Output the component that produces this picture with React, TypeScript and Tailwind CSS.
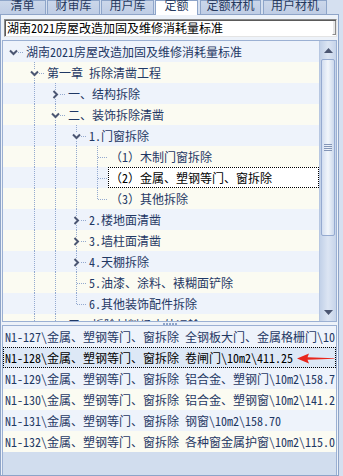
import React from "react";

type TreeRow = {
  label: string;
  guides: boolean[];
  top: boolean;
  bottom: boolean;
  arrow?: "down" | "right";
  selected?: boolean;
};

const treeRows: TreeRow[] = [
  { label: "湖南2021房屋改造加固及维修消耗量标准", guides: [], top: false, bottom: false, arrow: "down" },
  { label: "第一章 拆除清凿工程", guides: [false], top: true, bottom: true, arrow: "down" },
  { label: "一、结构拆除", guides: [false, true], top: true, bottom: true, arrow: "right" },
  { label: "二、装饰拆除清凿", guides: [false, true], top: true, bottom: true, arrow: "down" },
  { label: "1.门窗拆除", guides: [false, true, true], top: true, bottom: true, arrow: "down" },
  { label: "（1）木制门窗拆除", guides: [false, true, true, true], top: true, bottom: true },
  { label: "（2）金属、塑钢等门、窗拆除", guides: [false, true, true, true], top: true, bottom: true, selected: true },
  { label: "（3）其他拆除", guides: [false, true, true, true], top: true, bottom: false },
  { label: "2.楼地面清凿", guides: [false, true, true], top: true, bottom: true, arrow: "right" },
  { label: "3.墙柱面清凿", guides: [false, true, true], top: true, bottom: true, arrow: "right" },
  { label: "4.天棚拆除", guides: [false, true, true], top: true, bottom: true, arrow: "right" },
  { label: "5.油漆、涂料、裱糊面铲除", guides: [false, true, true], top: true, bottom: true },
  { label: "6.其他装饰配件拆除", guides: [false, true, true], top: true, bottom: false },
  { label: "三、拆除材料场内外运输", guides: [false, true], top: true, bottom: true, arrow: "right" },
];

const listRows = [
  "N1-127\\金属、塑钢等门、窗拆除 全钢板大门、金属格栅门\\10m2\\290.14",
  "N1-128\\金属、塑钢等门、窗拆除 卷闸门\\10m2\\411.25",
  "N1-129\\金属、塑钢等门、窗拆除 铝合金、塑钢门\\10m2\\158.70",
  "N1-130\\金属、塑钢等门、窗拆除 铝合金、塑钢窗\\10m2\\141.20",
  "N1-131\\金属、塑钢等门、窗拆除 钢窗\\10m2\\158.70",
  "N1-132\\金属、塑钢等门、窗拆除 各种窗金属护窗\\10m2\\115.00",
];

const LINE = "#93a9cf";
const ARROW = "#4b5672";

function GuideCell({ on }: { on: boolean }) {
  return (
    <svg width="21" height="21" className="block shrink-0" shapeRendering="crispEdges">
      {on && <line x1="10.5" y1="0" x2="10.5" y2="21" stroke={LINE} strokeWidth="1" strokeDasharray="1 1" />}
    </svg>
  );
}

function ConnectorCell({ row }: { row: TreeRow }) {
  const a = row.arrow;
  return (
    <svg width="21" height="21" className="block shrink-0">
      <g shapeRendering="crispEdges">
        {row.top && <line x1="10.5" y1="0" x2="10.5" y2={a ? 7 : 11.5} stroke={LINE} strokeDasharray="1 1" />}
        {row.bottom && <line x1="10.5" y1={a ? 16 : 11.5} x2="10.5" y2="21" stroke={LINE} strokeDasharray="1 1" />}
        <line x1={a ? 15 : 11} y1="11.5" x2="21" y2="11.5" stroke={LINE} strokeDasharray="1 1" />
      </g>
      {a === "down" && (
        <path d="M7 9.5 L10.5 13 L14 9.5" fill="none" stroke={ARROW} strokeWidth="2" />
      )}
      {a === "right" && (
        <path d="M8.5 8 L12 11.5 L8.5 15" fill="none" stroke={ARROW} strokeWidth="2" />
      )}
    </svg>
  );
}

function Tabs() {
  const tabs = [
    { t: "清单", w: "w-[46px]", ml: "ml-0", edge: "border-l-0" },
    { t: "财审库", w: "w-[53px]", ml: "ml-[1px]", edge: "" },
    { t: "用户库", w: "w-[53px]", ml: "ml-[1px]", edge: "" },
    { t: "定额", w: "w-[43px]", ml: "ml-[1px]", edge: "", active: true },
    { t: "定额材机", w: "w-[61px]", ml: "ml-[2px]", edge: "" },
    { t: "用户材机", w: "w-[64px]", ml: "ml-[2px]", edge: "" },
  ];
  return (
    <div className="flex h-[14px] items-start">
      {tabs.map((tab) => (
        <div
          key={tab.t}
          className={`${tab.w} ${tab.ml} ${tab.edge} flex justify-center items-start border border-b-0 border-[#8ea5c9] text-[#26395e] ${
            tab.active ? "relative z-10 h-[15px] bg-white" : "h-[14px] bg-gradient-to-b from-[#cbd7ea] to-[#bfcde5]"
          }`}
        >
          <span className="-mt-[3px] leading-[14px] text-[12px] whitespace-nowrap">{tab.t}</span>
        </div>
      ))}
    </div>
  );
}

function Input() {
  return (
    <div className="ml-[2px] h-[18px] flex border border-[#8a8a8a] border-r-[#e4e4e4] border-b-[#e4e4e4] bg-white shadow-[inset_1px_1px_0_#5a5a5a]">
      <div className="flex-1 pl-[2px] leading-[16px] text-black whitespace-nowrap overflow-hidden">
        湖南2021房屋改造加固及维修消耗量标准
      </div>
      <div className="w-[4px] h-[14px] mt-[1px] bg-[#e8e8e8] border-l border-white border-r border-b border-r-[#8a8a8a] border-b-[#8a8a8a]" />
    </div>
  );
}

function Scrollbar() {
  return (
    <div className="w-[17px] shrink-0 flex flex-col bg-gradient-to-r from-[#c2d1e8] via-[#dce5f3] to-[#c6d4ea] border-l border-[#b7c7e1]">
      <div className="h-[18px] flex items-center justify-center">
        <svg width="9" height="5" className="block">
          <path d="M0 5 L4.5 0 L9 5 Z" fill={ARROW} />
        </svg>
      </div>
      <div className="h-[177px] mx-[1px] rounded-[2px] border border-[#95aad0] bg-gradient-to-r from-[#d3def0] via-[#f2f6fb] to-[#ccd9ed] flex items-center justify-center">
        <svg width="8" height="8" className="block" shapeRendering="crispEdges">
          <line x1="0" y1="0.5" x2="8" y2="0.5" stroke="#8395b7" />
          <line x1="0" y1="2.5" x2="8" y2="2.5" stroke="#8395b7" />
          <line x1="0" y1="4.5" x2="8" y2="4.5" stroke="#8395b7" />
          <line x1="0" y1="6.5" x2="8" y2="6.5" stroke="#8395b7" />
        </svg>
      </div>
      <div className="flex-1" />
      <div className="h-[18px] flex items-center justify-center">
        <svg width="9" height="5" className="block">
          <path d="M0 0 L4.5 5 L9 0 Z" fill={ARROW} />
        </svg>
      </div>
    </div>
  );
}

function Tree() {
  return (
    <div className="mt-[3px] h-[282px] shrink-0 flex border border-[#9bb0d3]">
      <div className="flex-1 overflow-hidden">
        {treeRows.map((row, i) => (
          <div key={i} className={`flex h-[21px] ${i % 2 === 0 ? "bg-[#eef3fb]" : "bg-[#fbfbf2]"}`}>
            {row.guides.map((g, j) => (
              <GuideCell key={j} on={g} />
            ))}
            <ConnectorCell row={row} />
            <div
              className={`flex-1 min-w-0 h-[21px] pl-px leading-[19px] whitespace-nowrap overflow-hidden border ${
                row.selected ? "border-dotted border-black bg-white text-black" : "border-transparent text-[#1f3864]"
              }`}
            >
              {row.label}
            </div>
          </div>
        ))}
      </div>
      <Scrollbar />
    </div>
  );
}

function Splitter() {
  return (
    <div className="h-[3px] shrink-0 flex justify-center items-center">
      <div className="flex gap-[1px]">
        {[0, 1, 2, 3, 4].map((d) => (
          <div key={d} className="w-[2px] h-[2px] bg-[#8ea4c8]" />
        ))}
      </div>
    </div>
  );
}

function List() {
  return (
    <div className="flex-1 min-h-0 overflow-hidden border border-b-0 border-[#9bb0d3] bg-[#d1ddee]">
      {listRows.map((r, i) => {
        const sel = i === 1;
        const bg = sel ? "bg-[#dde8f6]" : i % 2 === 0 ? "bg-[#eef3fb]" : "bg-[#fbfbf2]";
        return (
          <div
            key={i}
            className={`relative h-[21px] pl-px leading-[19px] whitespace-nowrap overflow-hidden border ${bg} ${
              sel ? "border-dotted border-black text-black" : "border-transparent text-[#1f3864]"
            }`}
          >
            {r}
            {sel && (
              <svg width="38" height="11" className="absolute left-[293px] top-[5px]" viewBox="0 0 38 11">
                <path d="M0 5.5 L12 0.5 L10.5 4.3 L37.5 5.2 L37.5 5.8 L10.5 6.7 L12 10.5 Z" fill="#e8261c" />
              </svg>
            )}
          </div>
        );
      })}
    </div>
  );
}

export default function App() {
  return (
    <div className="w-[343px] h-[476px] overflow-hidden bg-[#d5e0f0] text-[12px] [font-family:'Noto_Sans_Mono_CJK_SC','Noto_Sans_CJK_SC',monospace]">
      <Tabs />
      <div className="w-[339px] h-[462px] border border-[#8ea4c8] bg-[#edf2f9] px-px pt-[4px] flex flex-col">
        <Input />
        <Tree />
        <Splitter />
        <List />
      </div>
    </div>
  );
}
